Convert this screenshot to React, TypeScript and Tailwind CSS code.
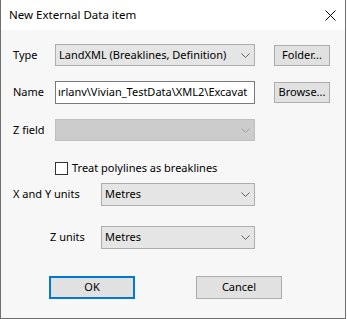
import React from 'react';

const font = { fontFamily: '"Noto Sans", "Open Sans", Arial, sans-serif' };

function Chevron({ color = '#606060' }: { color?: string }) {
  return (
    <svg width="9" height="5" viewBox="0 0 9 5" fill="none" stroke={color} strokeWidth="1">
      <path d="M0.5 0.5 L4.5 4.5 L8.5 0.5" />
    </svg>
  );
}

function Combo({ value, width, disabled }: { value?: string; width: string; disabled?: boolean }) {
  return (
    <div
      className={`${width} h-[22px] flex items-center justify-between pl-[3px] pr-[4px] border ${
        disabled ? 'bg-[#cccccc] border-[#bfbfbf]' : 'bg-[#e5e5e5] border-[#adadad]'
      }`}
    >
      <span className="text-[11px] text-black whitespace-nowrap">{value}</span>
      <Chevron color={disabled ? '#a0a0a0' : '#606060'} />
    </div>
  );
}

function Button({ label, width, primary }: { label: string; width: string; primary?: boolean }) {
  return (
    <button
      className={`${width} flex items-center justify-center bg-[#e1e1e1] text-[11px] text-black ${
        primary ? 'border-2 border-[#0078d7]' : 'border border-[#adadad]'
      }`}
    >
      {label}
    </button>
  );
}

export default function App() {
  return (
    <div
      className="w-[346px] h-[319px] flex flex-col bg-[#f7f7f7] border-l border-r border-b border-[#6f6f6f]"
      style={font}
    >
      {/* Title bar */}
      <div className="h-[30px] bg-white flex items-center justify-between pl-[8px] pr-[9px]">
        <span className="text-[11.5px] text-black">New External Data item</span>
        <svg width="11" height="11" viewBox="0 0 11 11" stroke="#000" strokeWidth="1">
          <path d="M0.5 0.5 L10.5 10.5 M10.5 0.5 L0.5 10.5" />
        </svg>
      </div>

      <div className="flex flex-col pl-[12px] text-[11px] text-black">
        {/* Type */}
        <div className="flex items-center mt-[14px] h-[22px]">
          <span className="w-[42px]">Type</span>
          <Combo value="LandXML (Breaklines, Definition)" width="w-[200px]" />
          <Button label="Folder..." width="w-[56px] h-[21px] ml-[19px]" />
        </div>

        {/* Name */}
        <div className="flex items-center mt-[15px] h-[23px]">
          <span className="w-[42px]">Name</span>
          <div className="w-[200px] h-[23px] bg-white border border-[#7a7a7a] overflow-hidden flex items-center pl-[2px]">
            <span className="whitespace-nowrap">ırlanv\Vivian_TestData\XML2\Excavat</span>
          </div>
          <Button label="Browse..." width="w-[56px] h-[21px] ml-[19px]" />
        </div>

        {/* Z field */}
        <div className="flex items-center mt-[15px] h-[22px]">
          <span className="w-[42px]">Z field</span>
          <Combo width="w-[200px]" disabled />
        </div>

        {/* Checkbox */}
        <div className="flex items-center mt-[21px] ml-[42px] h-[13px]">
          <div className="w-[13px] h-[13px] bg-white border border-[#333333]" />
          <span className="ml-[4px]">Treat polylines as breaklines</span>
        </div>

        {/* X and Y units */}
        <div className="flex items-center mt-[8px] h-[23px]">
          <span className="w-[88px]">X and Y units</span>
          <Combo value="Metres" width="w-[154px] !h-[23px]" />
        </div>

        {/* Z units */}
        <div className="flex items-center mt-[20px] h-[23px]">
          <span className="w-[88px] pl-[37px]">Z units</span>
          <Combo value="Metres" width="w-[154px] !h-[23px]" />
        </div>

        {/* Buttons */}
        <div className="flex items-center mt-[27px] h-[23px] pl-[36px]">
          <Button label="OK" width="w-[86px] h-[23px]" primary />
          <Button label="Cancel" width="w-[86px] h-[23px] ml-[61px]" />
        </div>
      </div>
    </div>
  );
}
